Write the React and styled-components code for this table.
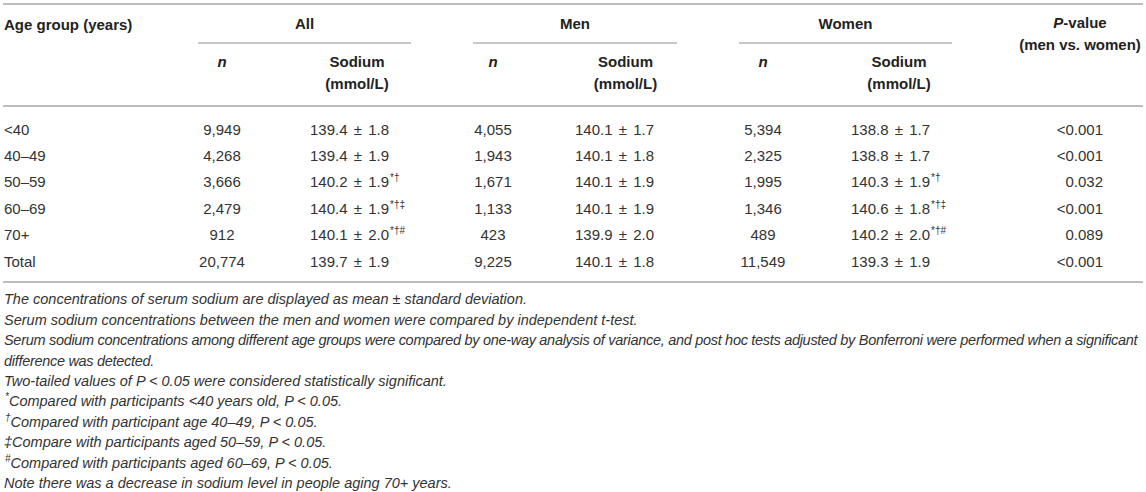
import styled, { createGlobalStyle } from "styled-components";

const GlobalStyle = createGlobalStyle`
  body {
    margin: 0;
    background: #fff;
    font-family: "Liberation Sans", Arial, sans-serif;
    color: #333;
  }
`;

const COLS = "195px 48px 165px 62px 40px 164px 62px 48px 165px 191px";

const Wrap = styled.div`
  padding: 3px 3px 0 3px;
  width: 1140px;
  font-size: 15px;
`;

const Head = styled.div`
  display: grid;
  grid-template-columns: ${COLS};
  grid-template-rows: 39px 61px;
  border-top: 2px solid #bdbdbd;
  border-bottom: 2px solid #bdbdbd;
  font-weight: bold;
  color: #222;
`;

const AgeHead = styled.div`
  grid-column: 1;
  grid-row: 1 / 3;
  padding: 10px 0 0 1px;
  line-height: 20px;
`;

const GroupHead = styled.div`
  grid-column: ${(p) => p.$col} / span 2;
  grid-row: 1;
  border-bottom: 2px solid #c8c8c8;
  display: flex;
  align-items: center;
  justify-content: center;
`;

const PHead = styled.div`
  grid-column: 10;
  grid-row: 1 / 3;
  padding: 7px 0 0 ${(p) => p.$pad}px;
  text-align: center;
  line-height: 22px;
`;

const SubHead = styled.div`
  grid-row: 2;
  grid-column: ${(p) => p.$col};
  padding: 7px 0 0 ${(p) => p.$pad || 0}px;
  text-align: center;
  line-height: 22px;
  font-style: ${(p) => (p.$italic ? "italic" : "normal")};
`;

const Body = styled.div`
  padding: 9px 0 7px;
  border-bottom: 2px solid #bdbdbd;
`;

const Row = styled.div`
  display: grid;
  grid-template-columns: ${COLS};
  height: 26.4px;
  align-items: center;
`;

const Cell = styled.div`
  grid-column: ${(p) => p.$col};
  text-align: ${(p) => p.$align || "center"};
  padding-left: ${(p) => p.$pl || 0}px;
  padding-right: ${(p) => p.$pr || 0}px;
  white-space: nowrap;
`;

const Sup = styled.sup`
  font-size: 10px;
  line-height: 0;
  vertical-align: 6px;
  margin-left: 1px;
`;

const Pm = styled.span`
  margin: 0 2px;
`;

const Notes = styled.div`
  padding: 6px 0 0 1px;
  font-style: italic;
  font-size: 14.5px;
  line-height: 20.4px;
  color: #333;
`;

const Note = styled.p`
  margin: 0;
  letter-spacing: ${(p) => (p.$tight ? "-0.3px" : "0")};
`;

const rows = [
  ["<40", "9,949", ["139.4", "1.8"], "4,055", ["140.1", "1.7"], "5,394", ["138.8", "1.7"], "<0.001"],
  ["40–49", "4,268", ["139.4", "1.9"], "1,943", ["140.1", "1.8"], "2,325", ["138.8", "1.7"], "<0.001"],
  ["50–59", "3,666", ["140.2", "1.9", "*†"], "1,671", ["140.1", "1.9"], "1,995", ["140.3", "1.9", "*†"], "0.032"],
  ["60–69", "2,479", ["140.4", "1.9", "*†‡"], "1,133", ["140.1", "1.9"], "1,346", ["140.6", "1.8", "*†‡"], "<0.001"],
  ["70+", "912", ["140.1", "2.0", "*†#"], "423", ["139.9", "2.0"], "489", ["140.2", "2.0", "*†#"], "0.089"],
  ["Total", "20,774", ["139.7", "1.9"], "9,225", ["140.1", "1.8"], "11,549", ["139.3", "1.9"], "<0.001"],
];

function Sodium({ v }) {
  return (
    <>
      {v[0]} <Pm>±</Pm> {v[1]}
      {v[2] && <Sup>{v[2]}</Sup>}
    </>
  );
}

export default function App() {
  return (
    <>
      <GlobalStyle />
      <Wrap>
        <Head>
          <AgeHead>Age group (years)</AgeHead>
          <GroupHead $col={2}>All</GroupHead>
          <GroupHead $col={5}>Men</GroupHead>
          <GroupHead $col={8}>Women</GroupHead>
          <PHead $pad={65}>
            <i>P</i>-value
            <br />
            (men vs. women)
          </PHead>
          <SubHead $col={2} $italic>n</SubHead>
          <SubHead $col={3} $pad={57}>
            Sodium
            <br />
            (mmol/L)
          </SubHead>
          <SubHead $col={5} $italic>n</SubHead>
          <SubHead $col={6} $pad={61}>
            Sodium
            <br />
            (mmol/L)
          </SubHead>
          <SubHead $col={8} $italic>n</SubHead>
          <SubHead $col={9} $pad={59}>
            Sodium
            <br />
            (mmol/L)
          </SubHead>
        </Head>
        <Body>
          {rows.map((r) => (
            <Row key={r[0]}>
              <Cell $col={1} $align="left" $pl={1}>{r[0]}</Cell>
              <Cell $col={2}>{r[1]}</Cell>
              <Cell $col={3} $align="left" $pl={64}><Sodium v={r[2]} /></Cell>
              <Cell $col={5}>{r[3]}</Cell>
              <Cell $col={6} $align="left" $pl={62}><Sodium v={r[4]} /></Cell>
              <Cell $col={8}>{r[5]}</Cell>
              <Cell $col={9} $align="left" $pl={64}><Sodium v={r[6]} /></Cell>
              <Cell $col={10} $align="right" $pr={40}>{r[7]}</Cell>
            </Row>
          ))}
        </Body>
        <Notes>
          <Note>The concentrations of serum sodium are displayed as mean ± standard deviation.</Note>
          <Note>Serum sodium concentrations between the men and women were compared by independent t-test.</Note>
          <Note $tight>
            Serum sodium concentrations among different age groups were compared by one-way analysis of variance, and post hoc tests adjusted by Bonferroni were performed when a significant difference was detected.
          </Note>
          <Note>Two-tailed values of P &lt; 0.05 were considered statistically significant.</Note>
          <Note><Sup>*</Sup>Compared with participants &lt;40 years old, P &lt; 0.05.</Note>
          <Note><Sup>†</Sup>Compared with participant age 40–49, P &lt; 0.05.</Note>
          <Note>‡Compare with participants aged 50–59, P &lt; 0.05.</Note>
          <Note><Sup>#</Sup>Compared with participants aged 60–69, P &lt; 0.05.</Note>
          <Note>Note there was a decrease in sodium level in people aging 70+ years.</Note>
        </Notes>
      </Wrap>
    </>
  );
}
